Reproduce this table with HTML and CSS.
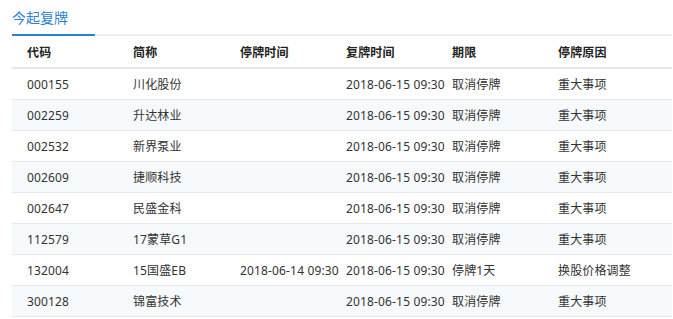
FILE: index.html
```html
<!DOCTYPE html>
<html lang="zh-CN">
<head>
<meta charset="utf-8">
<link rel="stylesheet" href="styles.css">
</head>
<body>
<div class="page">
  <div class="tabs">
    <div class="tab active">今起复牌</div>
  </div>
  <div class="table">
    <div class="row head">
      <div>代码</div><div>简称</div><div>停牌时间</div><div>复牌时间</div><div>期限</div><div>停牌原因</div>
    </div>
    <div class="row"><div>000155</div><div>川化股份</div><div></div><div>2018-06-15 09:30</div><div>取消停牌</div><div>重大事项</div></div>
    <div class="row"><div>002259</div><div>升达林业</div><div></div><div>2018-06-15 09:30</div><div>取消停牌</div><div>重大事项</div></div>
    <div class="row"><div>002532</div><div>新界泵业</div><div></div><div>2018-06-15 09:30</div><div>取消停牌</div><div>重大事项</div></div>
    <div class="row"><div>002609</div><div>捷顺科技</div><div></div><div>2018-06-15 09:30</div><div>取消停牌</div><div>重大事项</div></div>
    <div class="row"><div>002647</div><div>民盛金科</div><div></div><div>2018-06-15 09:30</div><div>取消停牌</div><div>重大事项</div></div>
    <div class="row"><div>112579</div><div>17蒙草G1</div><div></div><div>2018-06-15 09:30</div><div>取消停牌</div><div>重大事项</div></div>
    <div class="row"><div>132004</div><div>15国盛EB</div><div>2018-06-14 09:30</div><div>2018-06-15 09:30</div><div>停牌1天</div><div>换股价格调整</div></div>
    <div class="row"><div>300128</div><div>锦富技术</div><div></div><div>2018-06-15 09:30</div><div>取消停牌</div><div>重大事项</div></div>
  </div>
</div>
</body>
</html>
```
FILE: styles.css
```css
html, body {
  margin: 0;
  padding: 0;
  background: #fff;
}
.page {
  padding: 0 1px 0 12px;
  font-family: "Noto Sans", "Noto Sans CJK SC", sans-serif;
  color: #333;
}
.tabs {
  display: flex;
  border-bottom: 2px solid #eeeeee;
  height: 34px;
}
.tab {
  font-size: 14px;
  line-height: 34px;
  height: 34px;
  width: 83px;
  box-sizing: border-box;
}
.tab.active {
  color: #2b7fd6;
  border-bottom: 2px solid #2b7fd6;
  height: 36px;
  line-height: 35px;
  margin-bottom: -2px;
}
.table {
  font-size: 12px;
}
.row {
  display: grid;
  grid-template-columns: 106px 107px 106px 106px 106px 1fr;
  height: 30px;
  align-items: center;
  border-bottom: 1px solid #e8e8e8;
  white-space: nowrap;
}
.row > div {
  padding-left: 15px;
  letter-spacing: 0.15px;
}
.row.head {
  height: 30px;
  margin-top: 1px;
  border-bottom: 2px solid #e8e8e8;
  font-weight: bold;
  color: #222;
}
.row:nth-child(odd):not(.head) {
  background: #f7fafc;
}
```
